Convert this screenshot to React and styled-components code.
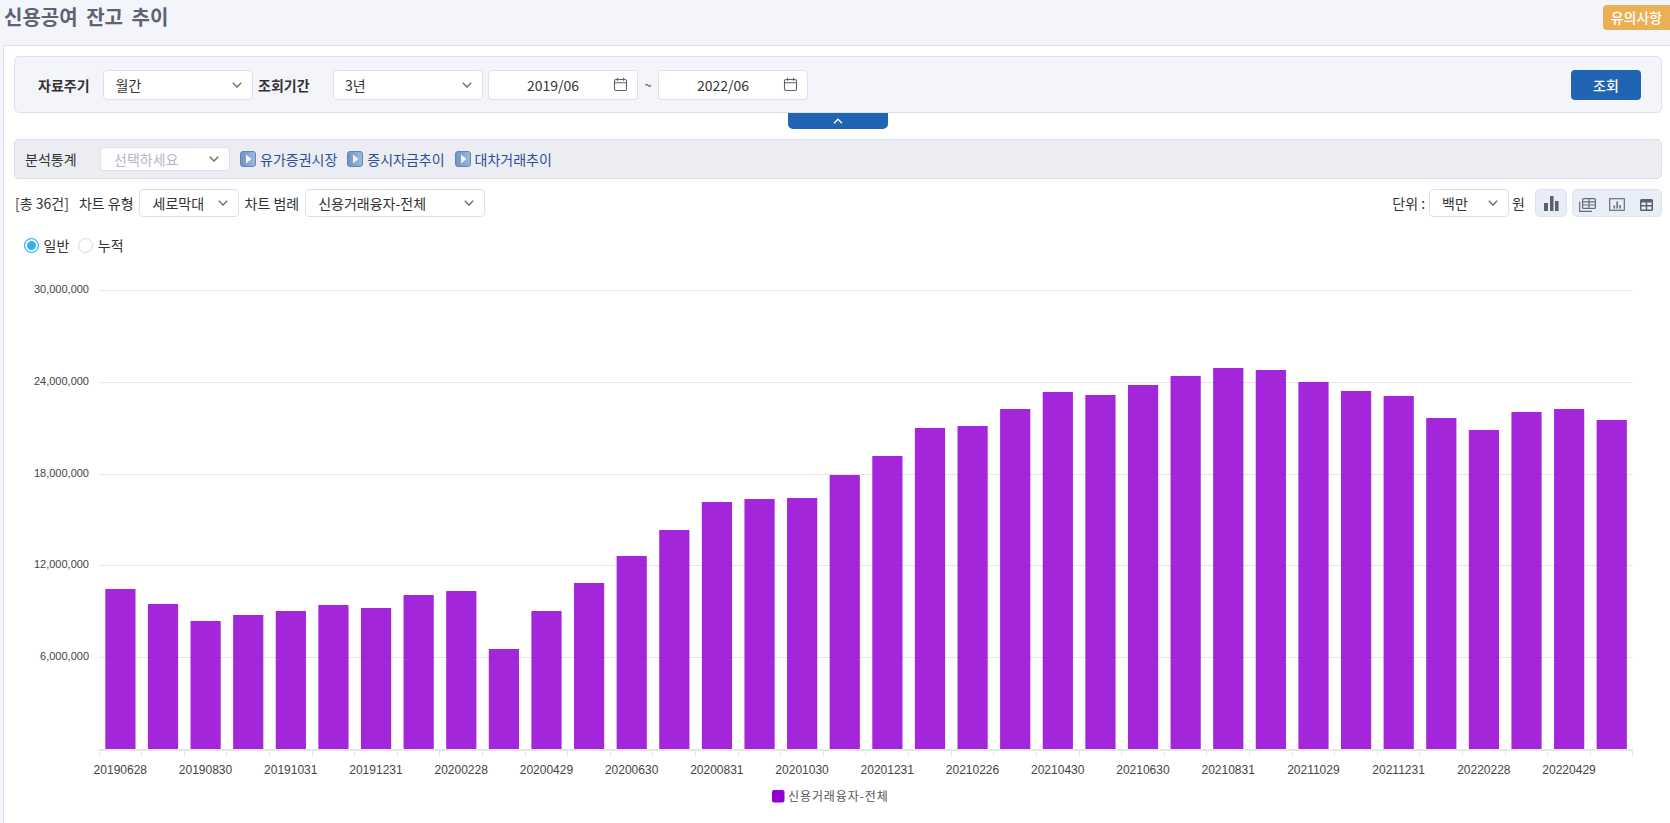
import React from 'react';
import styled, {createGlobalStyle} from 'styled-components';

const GlobalStyle = createGlobalStyle`
    html, body {
        margin: 0;
        padding: 0;
        background: #f4f5fa;
        color: #333;
        font-family: "Noto Sans CJK KR", "Noto Sans", sans-serif;
        font-size: 14px;
        overflow: hidden;
    }
    * { box-sizing: border-box; }
`;

const Page = styled.div`
    width: 1670px;
    height: 823px;
    overflow: hidden;
`;

const Header = styled.header`
    height: 45px;
    display: flex;
    justify-content: space-between;
    align-items: flex-start;
`;

const Title = styled.h1`
    margin: 0;
    padding-left: 4px;
    font-size: 20px;
    line-height: 34px;
    font-weight: 700;
    color: #5e6372;
    word-spacing: 4px;
`;

const NoticeButton = styled.div`
    margin-top: 5px;
    width: 67px;
    height: 25px;
    border-radius: 4px 0 0 4px;
    background: #ebb055;
    color: #fff;
    font-weight: 500;
    line-height: 25px;
    text-align: center;
`;

const Panel = styled.main`
    margin-left: 3px;
    height: 778px;
    padding: 10px 8px 0 10px;
    background: #fff;
    border-left: 1px solid #dde0ec;
    border-top: 1px solid #dde0ec;
`;

const SearchBox = styled.section`
    height: 57px;
    padding-left: 23px;
    display: flex;
    align-items: center;
    background: #f4f5fa;
    border: 1px solid #dde0ec;
    border-radius: 5px;
`;

const FieldLabel = styled.span`
    flex: none;
    width: ${(p) => p.$width}px;
    font-weight: 700;
    color: #333;
`;

const SelectBox = styled.div`
    flex: none;
    width: ${(p) => p.$width}px;
    height: ${(p) => p.$height || 30}px;
    margin-right: ${(p) => p.$gap || 0}px;
    padding: 0 10px 0 ${(p) => p.$pad || 13}px;
    display: flex;
    align-items: center;
    justify-content: space-between;
    background: #fff;
    border: 1px solid #dde0ec;
    border-radius: 4px;
    color: ${(p) => (p.$muted ? '#b4b8c6' : '#333')};
`;

const DateBox = styled.div`
    flex: none;
    width: 150px;
    height: 30px;
    padding: 0 9px 0 0;
    display: flex;
    align-items: center;
    background: #fff;
    border: 1px solid #dde0ec;
    border-radius: 4px;
    color: #333;
`;

const DateText = styled.span`
    flex: 1;
    text-align: center;
    padding-left: 4px;
`;

const Tilde = styled.span`
    flex: none;
    width: 20px;
    text-align: center;
    color: #555;
    font-size: 13px;
`;

const SearchButton = styled.button`
    margin-left: auto;
    margin-right: 20px;
    width: 70px;
    height: 30px;
    border: 0;
    border-radius: 4px;
    background: #2264b4;
    color: #fff;
    font: 500 14px "Noto Sans CJK KR", sans-serif;
`;

const CollapseTab = styled.div`
    width: 100px;
    height: 16px;
    margin: 0 auto 10px;
    display: flex;
    align-items: center;
    justify-content: center;
    background: #2264b4;
    border-radius: 0 0 5px 5px;
`;

const AnalysisBar = styled.section`
    height: 40px;
    padding-left: 10px;
    display: flex;
    align-items: center;
    background: #ebedf2;
    border: 1px solid #dde0ec;
    border-radius: 5px;
`;

const AnalysisLabel = styled.span`
    flex: none;
    width: 75px;
    color: #333;
`;

const StatLink = styled.a`
    margin-right: 10px;
    display: flex;
    align-items: center;
    gap: 4px;
    color: #2a4f94;
`;

const Toolbar = styled.div`
    height: 28px;
    margin-top: 10px;
    padding-left: 1px;
    display: flex;
    align-items: center;
`;

const ToolText = styled.span`
    flex: none;
    margin-right: ${(p) => p.$gap || 0}px;
    color: #333;
    white-space: nowrap;
`;

const RightTools = styled.div`
    margin-left: auto;
    display: flex;
    align-items: center;
`;

const IconButton = styled.div`
    height: 28px;
    width: ${(p) => p.$width}px;
    margin-left: ${(p) => p.$gap}px;
    display: flex;
    align-items: center;
    justify-content: center;
    background: #e8edf6;
    border: 1px solid #dde2ee;
    border-radius: 5px;
`;

const IconGroup = styled(IconButton)`
    justify-content: flex-start;
    gap: 13px;
    padding: 3px 0 0 6px;
`;

const RadioRow = styled.div`
    height: 16px;
    margin-top: 20px;
    padding-left: 9.5px;
    display: flex;
    align-items: center;
`;

const RadioDot = styled.span`
    flex: none;
    width: 15px;
    height: 15px;
    margin-right: 5px;
    border-radius: 50%;
    background: ${(p) => (p.$on ? '#2eb2f5' : '#fff')};
    border: ${(p) => (p.$on ? '1.5px solid #2eb2f5' : '1px solid #d5d8e0')};
    box-shadow: ${(p) => (p.$on ? 'inset 0 0 0 2px #fff' : 'none')};
`;

const RadioText = styled.span`
    margin-right: 8.5px;
    color: #333;
`;

const ChartSvg = styled.svg`
    display: block;
    margin: 7px 0 0 -10px;
`;

const Chevron = ({color = '#666', up}) => (
    <svg width="10" height="6" viewBox="0 0 10 6" fill="none" stroke={color} strokeWidth="1.3">
        <path d={up ? 'M1 5.2 5 1.2 9 5.2' : 'M.8 .8 5 5 9.2 .8'} />
    </svg>
);

const CalendarIcon = () => (
    <svg width="15" height="15" viewBox="0 0 15 15" fill="none" stroke="#5c606c" strokeWidth="1.1">
        <rect x="1.5" y="2.5" width="12" height="11" rx="1.5" />
        <path d="M1.5 5.8h12M4.5 .8v3M10.5 .8v3" />
    </svg>
);

const PlayIcon = ({id}) => (
    <svg width="16" height="16" viewBox="0 0 16 16">
        <defs>
            <linearGradient id={id} x1="0" y1="0" x2="1" y2="0">
                <stop offset="0" stopColor="#6f93c2" />
                <stop offset="1" stopColor="#9fb9d9" />
            </linearGradient>
        </defs>
        <rect x=".5" y=".5" width="15" height="15" rx="2.5" fill={`url(#${id})`} stroke="#5f86ba" />
        <path d="M6 3.500 11.500 8 6 12.500Z" fill="#eef3f9" />
    </svg>
);

const BarsIcon = () => (
    <svg width="15" height="15" viewBox="0 0 15 15" fill="#5a6070">
        <rect x="0" y="7" width="4" height="8" />
        <rect x="6" y="0" width="3.500" height="15" />
        <rect x="11" y="5" width="3.500" height="10" />
    </svg>
);

const GridStackIcon = () => (
    <svg width="17" height="14" viewBox="0 0 17 14" fill="none" stroke="#666c7c" strokeWidth="1.2">
        <rect x="3.600" y=".6" width="12.800" height="9.800" rx="1" />
        <path d="M3.600 3.800h12.800M10 .6v9.800M3.600 7h12.800" />
        <path d="M.7 3.500v9.800h12.300" />
    </svg>
);

const FrameChartIcon = () => (
    <svg width="17" height="13" viewBox="0 0 17 13" fill="none">
        <rect x=".7" y=".7" width="14.600" height="11.600" stroke="#666c7c" strokeWidth="1.2" />
        <path d="M4.500 7.500h1.600v3H4.500zM7.400 3.500h1.600v7H7.400zM10.300 7h1.600v3.500h-1.600z" fill="#666c7c" />
    </svg>
);

const TableIcon = () => (
    <svg width="14" height="12" viewBox="0 0 14 12">
        <rect x="1" width="13" height="12" rx="1.500" fill="#5a6070" />
        <path d="M2.500 3.500h4.300v2.500H2.500zM8.200 3.500h4.300v2.500H8.200zM2.500 7.500h4.300v3H2.500zM8.200 7.500h4.300v3H8.200z" fill="#e8edf6" />
    </svg>
);

const tops = [
    589, 604, 621, 615, 611, 605, 608, 595, 591, 649, 611, 583,
    556, 530, 502, 499, 498, 475, 456, 428, 426, 409, 392, 395,
    385, 376, 368, 370, 382, 391, 396, 418, 430, 412, 409, 420,
];

const xLabels = [
    '20190628', '20190830', '20191031', '20191231', '20200228', '20200429',
    '20200630', '20200831', '20201030', '20201231', '20210226', '20210430',
    '20210630', '20210831', '20211029', '20211231', '20220228', '20220429',
];

const yTicks = [
    {y: 290.5, label: '30,000,000'},
    {y: 382.5, label: '24,000,000'},
    {y: 474.5, label: '18,000,000'},
    {y: 565.5, label: '12,000,000'},
    {y: 657.5, label: '6,000,000'},
];

const LEFT = 99;
const STEP = 42.61;
const BOTTOM = 749;

const tickX = (i) => Math.floor(LEFT + STEP * i) + 0.5;

const Chart = () => (
    <ChartSvg width="1666" height="563" viewBox="4 260 1666 563" fontFamily='"Liberation Sans", Arial, sans-serif'>
        {yTicks.map((t) => (
            <g key={t.label}>
                <line x1={LEFT} x2={1633} y1={t.y} y2={t.y} stroke="#e6e6e6" />
                <text x={89} y={t.y + 2} textAnchor="end" fontSize="11" fill="#444">{t.label}</text>
            </g>
        ))}
        {tops.map((top, i) => (
            <rect
                key={i}
                x={LEFT + STEP * i + 6.3}
                y={top}
                width={30.2}
                height={BOTTOM - top}
                fill="#9400d3"
                fillOpacity=".85"
            />
        ))}
        <line x1={LEFT} x2={1633} y1={BOTTOM + 1} y2={BOTTOM + 1} stroke="#e6e6e6" strokeWidth="2" />
        {tops.map((_, i) => (
            <line key={i} x1={tickX(i)} x2={tickX(i)} y1={BOTTOM} y2={756} stroke="#e6e6e6" />
        ))}
        <line x1={1632.5} x2={1632.5} y1={BOTTOM} y2={756} stroke="#e6e6e6" />
        {xLabels.map((label, i) => (
            <text key={label} x={LEFT + STEP * (i * 2 + 0.5)} y={774} textAnchor="middle" fontSize="12" fill="#444">{label}</text>
        ))}
        <rect x={772} y={790} width={12.5} height={12.5} rx={2} fill="#9400d3" />
        <text x={788} y={801} fontSize="12" letterSpacing=".9" fill="#555" fontFamily='"Noto Sans CJK KR", sans-serif'>신용거래융자-전체</text>
    </ChartSvg>
);

export default function App() {
    return (
        <Page>
            <GlobalStyle />
            <Header>
                <Title>신용공여 잔고 추이</Title>
                <NoticeButton>유의사항</NoticeButton>
            </Header>
            <Panel>
                <SearchBox>
                    <FieldLabel $width={64.5}>자료주기</FieldLabel>
                    <SelectBox $width={150} $gap={5.5} $pad={12}>월간<Chevron /></SelectBox>
                    <FieldLabel $width={75}>조회기간</FieldLabel>
                    <SelectBox $width={150} $gap={5} $pad={11}>3년<Chevron /></SelectBox>
                    <DateBox><DateText>2019/06</DateText><CalendarIcon /></DateBox>
                    <Tilde>~</Tilde>
                    <DateBox><DateText>2022/06</DateText><CalendarIcon /></DateBox>
                    <SearchButton>조회</SearchButton>
                </SearchBox>
                <CollapseTab><Chevron color="#fff" up /></CollapseTab>
                <AnalysisBar>
                    <AnalysisLabel>분석통계</AnalysisLabel>
                    <SelectBox $width={130} $height={24} $gap={10} $muted>선택하세요<Chevron /></SelectBox>
                    <StatLink><PlayIcon id="p1" />유가증권시장</StatLink>
                    <StatLink><PlayIcon id="p2" />증시자금추이</StatLink>
                    <StatLink><PlayIcon id="p3" />대차거래추이</StatLink>
                </AnalysisBar>
                <Toolbar>
                    <ToolText $gap={10}>[총 36건]</ToolText>
                    <ToolText $gap={5}>차트 유형</ToolText>
                    <SelectBox $width={100} $height={28} $gap={6}>세로막대<Chevron /></SelectBox>
                    <ToolText $gap={6}>차트 범례</ToolText>
                    <SelectBox $width={180} $height={28} $pad={12}>신용거래융자-전체<Chevron /></SelectBox>
                    <RightTools>
                        <ToolText $gap={4}>단위 :</ToolText>
                        <SelectBox $width={80} $height={28} $gap={3} $pad={12}>백만<Chevron /></SelectBox>
                        <ToolText>원</ToolText>
                        <IconButton $width={32} $gap={10}><BarsIcon /></IconButton>
                        <IconGroup $width={90} $gap={5}>
                            <GridStackIcon />
                            <FrameChartIcon />
                            <TableIcon />
                        </IconGroup>
                    </RightTools>
                </Toolbar>
                <RadioRow>
                    <RadioDot $on />
                    <RadioText>일반</RadioText>
                    <RadioDot />
                    <RadioText>누적</RadioText>
                </RadioRow>
                <Chart />
            </Panel>
        </Page>
    );
}
